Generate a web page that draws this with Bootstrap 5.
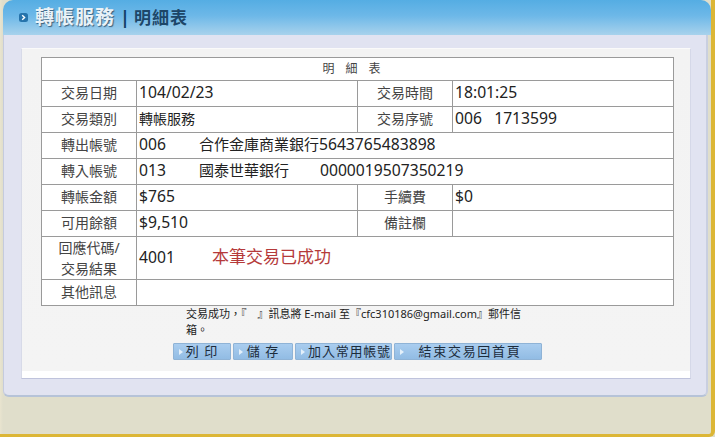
<!DOCTYPE html>
<html lang="zh-Hant">
<head>
<meta charset="utf-8">
<title>明細表</title>
<link href="https://cdn.jsdelivr.net/npm/bootstrap@5.3.0/dist/css/bootstrap.min.css" rel="stylesheet">
<style>
html,body{height:437px;overflow:hidden}
body{background:#e0decb;font-family:"Noto Sans","Noto Sans CJK TC",sans-serif;color:#333}
.frame{height:437px;padding-left:3px;border-right:4px solid #dcb636;border-bottom:3px solid #dcb636;border-bottom-right-radius:6px;background:linear-gradient(90deg,#e9e4cf 0,#e0decb 3px)}
.title-bar{height:35px;background:linear-gradient(180deg,#55ade3 0,#6db8e8 45%,#a8d2ec 100%);border-top-left-radius:10px;border-top-right-radius:10px;padding-left:16px;gap:7px}
.title-mark{width:9px;height:9px;flex:none;display:block}
.title-main{font-size:19px;font-weight:700;letter-spacing:1px;color:#e9f2f8;text-shadow:1px 1px 1px #3c5f7c;line-height:35px}
.title-sep{font-size:18px;font-weight:700;color:#123f66;margin:0 4px 0 5px;line-height:35px}
.title-sub{font-size:17px;font-weight:700;letter-spacing:1px;color:#1d4668;line-height:35px}
.outer-panel{width:705px;height:362px;padding:13px 18px 18px 17px;background:#e1e3f1;border-right:2px solid #c9cfe0;border-bottom:2px solid #b6c3d8;border-bottom-left-radius:6px;border-bottom-right-radius:6px;border-left:1px solid #c5cbde}
.inner-panel{width:670px;height:331px;padding:8px 16px 0 19px;background:linear-gradient(180deg,#f3f3f3 0,#f4f4f4 98%,#fff 98%);border:1px solid #fff;border-top-color:#fafafa;border-bottom-color:#bfc3dc;border-right-color:#d5d8e8;border-left-color:#d7dae8}
table.detail{table-layout:fixed;width:632px;margin:0;background:#fff;border-collapse:collapse}
table.detail td{border:1px solid #9a9a9a;padding:0 2px 3px;font-size:15.7px;line-height:18px;color:#222;vertical-align:middle;background:#fff;box-shadow:none}
table.detail td.lbl{font-size:14px;line-height:21px;color:#444;text-align:center;padding:0 0 3px}
table.detail .r43 td.lbl{padding:0}
table.detail td.cap{font-size:12px;line-height:16px;color:#444;text-align:center;letter-spacing:4px;padding:0 8px 0 0;height:23px}
.r26{height:26px}.r43{height:43px}
.cjk-small{font-size:14px}
.cjk-mid{font-size:15px}
.gap-bank{margin-left:33px}
.gap-acct{margin-left:31px}
.result-text{color:#b53a3a;font-size:17px;margin-left:37px}
.notice{width:346px;margin:0 0 0 145px;font-size:11px;line-height:16px;color:#222}
.action-row{margin:5px 0 0 132px;gap:2px}
.act{height:17px;padding:0;border:1px solid #8fb3d6;border-radius:1px;background:linear-gradient(180deg,#a9cdef 0,#92bce4 100%);font-size:13px;line-height:15px;color:#1c2c3c;text-align:center;position:relative;letter-spacing:1px}
.act:hover{background:#92bce4;color:#1c2c3c;border-color:#8fb3d6}
.act::before{content:"";position:absolute;left:5px;top:5px;border-left:4px solid #e4f0fa;border-top:3px solid transparent;border-bottom:3px solid transparent}
.w1{width:58px}.w2{width:60px}.w3{width:97px;letter-spacing:.8px;padding-left:12px}.w4{width:148px;letter-spacing:1.7px;padding-left:4px}
</style>
</head>
<body>
<div class="frame">
  <div class="title-bar d-flex align-items-center">
    <svg class="title-mark" viewBox="0 0 9 9"><rect width="9" height="9" rx="2.5" fill="#2673ab"/><path d="M3.2 2.2 5.6 4.5 3.2 6.8" fill="none" stroke="#fff" stroke-width="1.4"/></svg>
    <div class="d-flex align-items-center">
      <span class="title-main">轉帳服務</span><span class="title-sep">|</span><span class="title-sub">明細表</span>
    </div>
  </div>
  <div class="outer-panel">
    <div class="inner-panel">
      <table class="table detail">
        <colgroup><col style="width:95px"><col style="width:221px"><col style="width:95px"><col style="width:221px"></colgroup>
        <tbody>
          <tr><td class="cap" colspan="4">明 細 表</td></tr>
          <tr class="r26"><td class="lbl">交易日期</td><td>104/02/23</td><td class="lbl">交易時間</td><td>18:01:25</td></tr>
          <tr class="r26"><td class="lbl">交易類別</td><td><span class="cjk-small">轉帳服務</span></td><td class="lbl">交易序號</td><td>006&nbsp;&nbsp;&nbsp;1713599</td></tr>
          <tr class="r26"><td class="lbl">轉出帳號</td><td colspan="3">006<span class="gap-bank cjk-mid">合作金庫商業銀行</span>5643765483898</td></tr>
          <tr class="r26"><td class="lbl">轉入帳號</td><td colspan="3">013<span class="gap-bank cjk-mid">國泰世華銀行</span><span class="gap-acct">0000019507350219</span></td></tr>
          <tr class="r26"><td class="lbl">轉帳金額</td><td>$765</td><td class="lbl">手續費</td><td>$0</td></tr>
          <tr class="r26"><td class="lbl">可用餘額</td><td>$9,510</td><td class="lbl">備註欄</td><td></td></tr>
          <tr class="r43"><td class="lbl">回應代碼/<br>交易結果</td><td colspan="3">4001<span class="result-text">本筆交易已成功</span></td></tr>
          <tr class="r26"><td class="lbl">其他訊息</td><td colspan="3"></td></tr>
        </tbody>
      </table>
      <p class="notice">交易成功，『　』訊息將 E-mail 至『cfc310186@gmail.com』郵件信箱。</p>
      <div class="action-row d-flex">
        <button type="button" class="btn act w1">列 印</button>
        <button type="button" class="btn act w2">儲 存</button>
        <button type="button" class="btn act w3">加入常用帳號</button>
        <button type="button" class="btn act w4">結束交易回首頁</button>
      </div>
    </div>
  </div>
</div>
<script src="https://cdn.jsdelivr.net/npm/bootstrap@5.3.0/dist/js/bootstrap.bundle.min.js"></script>
</body>
</html>
